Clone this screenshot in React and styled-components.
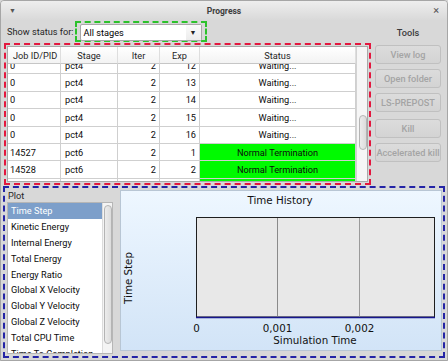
import React from 'react'
import styled, { createGlobalStyle } from 'styled-components'

const GlobalStyle = createGlobalStyle`
	html, body {
		margin: 0;
		padding: 0;
		background: #d8d8d8;
	}
	body {
		font-family: Roboto, 'Liberation Sans', sans-serif;
		font-size: 9.2px;
		color: #111;
	}
`

const Window = styled.div`
	width: 448px;
	height: 361px;
	box-sizing: border-box;
	display: flex;
	flex-direction: column;
	background: #d8d8d8;
	border: 1px solid #a6a6a6;
	border-radius: 4px 4px 0 0;
	overflow: hidden;
`

const TitleBar = styled.div`
	flex: none;
	height: 19px;
	display: grid;
	grid-template-columns: 1fr auto 1fr;
	align-items: center;
	padding: 0 8px;
	background: linear-gradient(#eeeeee, #d9d9d9);
	font-size: 8.5px;
	font-weight: 700;
	color: #3c3c3c;
`

const TitleIcon = styled.span`
	justify-self: ${props => (props.$right ? 'end' : 'start')};
	font-size: ${props => (props.$right ? '11px' : '7px')};
	font-weight: 400;
	color: #555;
`

const Main = styled.div`
	flex: 1;
	display: flex;
	flex-direction: column;
	padding: 0 2px 2px 2px;
	min-height: 0;
`

const TopSection = styled.div`
	display: flex;
	height: 165px;
	flex: none;
`

const LeftColumn = styled.div`
	width: 368px;
	display: flex;
	flex-direction: column;
`

const FilterRow = styled.div`
	height: 23px;
	display: flex;
	align-items: center;
	padding-left: 4px;
	color: #262626;
`

const ComboOutline = styled.div`
	margin-left: 1px;
	width: 132px;
	height: 21px;
	box-sizing: border-box;
	border: 2px dashed #2cc22c;
	padding: 1px 3px;
`

const Combo = styled.div`
	height: 15px;
	display: flex;
	border: 1px solid #a8a8a8;
	border-radius: 2px;
	background: #fff;
`

const ComboText = styled.span`
	flex: 1;
	padding-left: 3px;
	line-height: 15px;
	color: #000;
`

const ComboArrow = styled.span`
	width: 15px;
	display: flex;
	align-items: center;
	justify-content: center;
	background: linear-gradient(#fafafa, #ececec);
	font-size: 7px;
	color: #222;
`

const TableBox = styled.div`
	margin-left: 1px;
	height: 142px;
	box-sizing: border-box;
	border: 2px dashed #e3173e;
	padding: 1px;
	display: flex;
`

const TableFrame = styled.div`
	flex: 1;
	display: flex;
	border: 1px solid #a9a9a9;
	background: #fff;
	overflow: hidden;
`

const TableArea = styled.div`
	width: 348px;
	display: flex;
	flex-direction: column;
`

const columns = '53px 57px 42px 40px 156px'

const HeaderRow = styled.div`
	display: grid;
	grid-template-columns: ${columns};
	height: 17px;
	flex: none;
`

const HeaderCell = styled.div`
	display: flex;
	align-items: center;
	justify-content: ${props => (props.$left ? 'flex-start' : 'center')};
	padding-left: ${props => (props.$left ? '5px' : '0')};
	border-right: 1px solid #dedede;
	border-bottom: 1px solid #c6c6c6;
	background: linear-gradient(#ffffff, #f3f3f3);
	color: #262626;
`

const BodyViewport = styled.div`
	flex: 1;
	overflow: hidden;
`

const BodyRows = styled.div`
	margin-top: -7px;
`

const Row = styled.div`
	display: grid;
	grid-template-columns: ${columns};
	height: 17.4px;
`

const Cell = styled.div`
	box-sizing: border-box;
	display: flex;
	align-items: center;
	justify-content: ${props =>
		props.$align === 'right' ? 'flex-end' : props.$align === 'center' ? 'center' : 'flex-start'};
	padding: 0 3px 0 ${props => (props.$pad ? props.$pad : '3px')};
	border-right: 1px solid #cfcfcf;
	border-bottom: 1px solid #cfcfcf;
	background: ${props => (props.$ok ? '#00fa00' : '#fff')};
	color: #0c0c0c;
	white-space: nowrap;
`

const ScrollTrack = styled.div`
	width: 12px;
	flex: none;
	display: flex;
	flex-direction: column;
	align-items: center;
	border-left: 1px solid #d2d2d2;
	background: #f6f6f6;
`

const ScrollThumb = styled.div`
	margin-top: ${props => props.$top}px;
	width: 6px;
	height: ${props => props.$height}px;
	border: 1px solid #b4b4b4;
	border-radius: 4px;
	background: linear-gradient(90deg, #ececec, #dcdcdc);
`

const RightColumn = styled.div`
	flex: 1;
	display: flex;
	flex-direction: column;
	align-items: center;
`

const ToolsLabel = styled.div`
	height: 25px;
	line-height: 25px;
	font-weight: 500;
	color: #3a3a3a;
`

const ToolButton = styled.button`
	width: 66px;
	height: 19px;
	margin-bottom: 5px;
	margin-top: ${props => (props.$spaced ? '2px' : '0')};
	padding: 0;
	border: 1px solid #c0c0c0;
	border-radius: 3px;
	background: linear-gradient(#dcdcdc, #d3d3d3);
	font-family: inherit;
	font-size: 9.2px;
	font-weight: 500;
	color: #a4a4a4;
	white-space: nowrap;
`

const PlotBox = styled.div`
	flex: 1;
	margin-top: 1px;
	box-sizing: border-box;
	border: 2px dashed #2424a6;
	padding: 0 1px 1px 2px;
	display: flex;
	gap: 7px;
	min-height: 0;
`

const PlotColumn = styled.div`
	width: 106px;
	display: flex;
	flex-direction: column;
`

const PlotLabel = styled.div`
	height: 14px;
	padding: 1px 0 0 1px;
	box-sizing: border-box;
	line-height: 13px;
	color: #262626;
`

const List = styled.div`
	flex: 1;
	display: flex;
	border: 1px solid #b6b6b6;
	background: #fff;
	overflow: hidden;
	margin-bottom: 1px;
`

const ListItems = styled.div`
	flex: 1;
`

const ListItem = styled.div`
	height: 15.8px;
	display: flex;
	align-items: center;
	padding-left: 3px;
	white-space: nowrap;
	background: ${props => (props.$selected ? '#7d9fca' : 'transparent')};
	color: ${props => (props.$selected ? '#fff' : '#0c0c0c')};
`

const ListScroll = styled.div`
	width: 9px;
	flex: none;
	display: flex;
	flex-direction: column;
	align-items: center;
	border-left: 1px solid #dcdcdc;
	background: #f4f4f4;
`

const ChartPanel = styled.div`
	flex: 1;
	margin: 2px 0 4px 0;
	border: 1px solid #b8c6d4;
	background: linear-gradient(#eef7ff, #d2e4f7);
	display: flex;
`

const Chart = styled.svg`
	display: block;
	font-family: 'DejaVu Sans', sans-serif;
	font-size: 10.3px;
`

const rows = [
	{ id: '0', stage: 'pct4', iter: 2, exp: 12, status: 'Waiting...' },
	{ id: '0', stage: 'pct4', iter: 2, exp: 13, status: 'Waiting...' },
	{ id: '0', stage: 'pct4', iter: 2, exp: 14, status: 'Waiting...' },
	{ id: '0', stage: 'pct4', iter: 2, exp: 15, status: 'Waiting...' },
	{ id: '0', stage: 'pct4', iter: 2, exp: 16, status: 'Waiting...' },
	{ id: '14527', stage: 'pct6', iter: 2, exp: 1, status: 'Normal Termination', ok: true },
	{ id: '14528', stage: 'pct6', iter: 2, exp: 2, status: 'Normal Termination', ok: true },
	{ id: '14529', stage: 'pct6', iter: 2, exp: 3, status: 'Normal Termination', ok: true },
]

const plotItems = [
	'Time Step',
	'Kinetic Energy',
	'Internal Energy',
	'Total Energy',
	'Energy Ratio',
	'Global X Velocity',
	'Global Y Velocity',
	'Global Z Velocity',
	'Total CPU Time',
	'Time To Completion',
]

const TimeHistory = () => (
	<Chart width='320' height='159' viewBox='0 0 320 159'>
		<text x='159' y='12.5' textAnchor='middle' fill='#111'>Time History</text>
		<rect x='75.5' y='26.5' width='238' height='99.5' fill='#e8e8e8' stroke='#1e1e1e' strokeWidth='1' />
		<line x1='156.5' y1='27' x2='156.5' y2='126' stroke='#8a8a8a' strokeWidth='1' />
		<line x1='238.5' y1='27' x2='238.5' y2='126' stroke='#9a9a9a' strokeWidth='1' />
		<line x1='75' y1='126.5' x2='314' y2='126.5' stroke='#16168c' strokeWidth='1.6' />
		<text x='75.5' y='140.5' textAnchor='middle' fill='#111'>0</text>
		<text x='156.5' y='140.5' textAnchor='middle' fill='#111'>0,001</text>
		<text x='238.5' y='140.5' textAnchor='middle' fill='#111'>0,002</text>
		<text x='194' y='152.5' textAnchor='middle' fill='#111'>Simulation Time</text>
		<text transform='translate(10.5 87) rotate(-90)' textAnchor='middle' fill='#111'>Time Step</text>
	</Chart>
)

const App = () => (
	<>
		<GlobalStyle />
		<Window>
			<TitleBar>
				<TitleIcon>▼</TitleIcon>
				<span>Progress</span>
				<TitleIcon $right>×</TitleIcon>
			</TitleBar>
			<Main>
				<TopSection>
					<LeftColumn>
						<FilterRow>
							Show status for:
							<ComboOutline>
								<Combo>
									<ComboText>All stages</ComboText>
									<ComboArrow>▼</ComboArrow>
								</Combo>
							</ComboOutline>
						</FilterRow>
						<TableBox>
							<TableFrame>
								<TableArea>
									<HeaderRow>
										<HeaderCell $left>Job ID/PID</HeaderCell>
										<HeaderCell>Stage</HeaderCell>
										<HeaderCell>Iter</HeaderCell>
										<HeaderCell>Exp</HeaderCell>
										<HeaderCell>Status</HeaderCell>
									</HeaderRow>
									<BodyViewport>
										<BodyRows>
											{rows.map((r, i) => (
												<Row key={i}>
													<Cell $pad='2px'>{r.id}</Cell>
													<Cell $pad='4px'>{r.stage}</Cell>
													<Cell $align='right'>{r.iter}</Cell>
													<Cell $align='right'>{r.exp}</Cell>
													<Cell $align='center' $ok={r.ok}>{r.status}</Cell>
												</Row>
											))}
										</BodyRows>
									</BodyViewport>
								</TableArea>
								<ScrollTrack>
									<ScrollThumb $top={68} $height={33} />
								</ScrollTrack>
							</TableFrame>
						</TableBox>
					</LeftColumn>
					<RightColumn>
						<ToolsLabel>Tools</ToolsLabel>
						<ToolButton disabled>View log</ToolButton>
						<ToolButton disabled>Open folder</ToolButton>
						<ToolButton disabled>LS-PREPOST</ToolButton>
						<ToolButton disabled $spaced>Kill</ToolButton>
						<ToolButton disabled>Accelerated kill</ToolButton>
					</RightColumn>
				</TopSection>
				<PlotBox>
					<PlotColumn>
						<PlotLabel>Plot</PlotLabel>
						<List>
							<ListItems>
								{plotItems.map((item, i) => (
									<ListItem key={item} $selected={i === 0}>{item}</ListItem>
								))}
							</ListItems>
							<ListScroll>
								<ScrollThumb $top={2} $height={137} />
							</ListScroll>
						</List>
					</PlotColumn>
					<ChartPanel>
						<TimeHistory />
					</ChartPanel>
				</PlotBox>
			</Main>
		</Window>
	</>
)

export default App
